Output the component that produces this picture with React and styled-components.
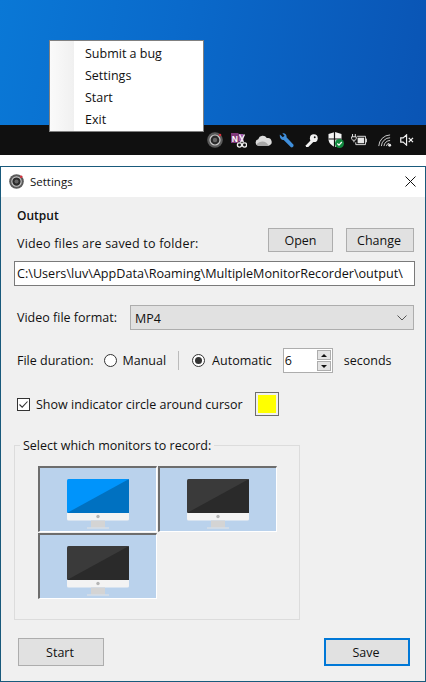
import React from "react"
import styled, { createGlobalStyle } from "styled-components"

const Global = createGlobalStyle`
html, body { margin: 0; padding: 0; background: #fff; }
* { box-sizing: border-box; }
body { font-family: "Open Sans", "Noto Sans", sans-serif; font-size: 12px; color: #111; }
`

const Page = styled.div`
width: 426px;
height: 682px;
position: relative;
overflow: hidden;
display: flex;
flex-direction: column;
`

const Desktop = styled.div`
height: 125px;
background: linear-gradient(100deg, #0a78d6 0%, #0a6acb 40%, #0a54b4 100%);
`

const Taskbar = styled.div`
height: 30px;
background: #101010;
display: flex;
align-items: center;
padding-left: 207px;
`

const TrayIcon = styled.svg`
display: block;
flex: none;
margin-left: ${props => props.$gap}px;
`

const Menu = styled.div`
position: absolute;
left: 49px;
top: 40px;
width: 155px;
height: 92px;
background: linear-gradient(90deg, #fafafa 0, #f0f0f0 24px, #fff 24px);
border: 1px solid #808080;
padding-top: 2px;
`

const MenuItem = styled.div`
height: 22px;
line-height: 22px;
padding-left: 35px;
font-size: 12.5px;
color: #111;
`

const Window = styled.div`
margin-top: 11px;
flex: 1;
border: 1px solid #195a7c;
background: #f0f0f0;
display: flex;
flex-direction: column;
`

const TitleBar = styled.div`
height: 30px;
background: #fff;
display: flex;
align-items: center;
padding: 0 9px 2px 8px;
font-size: 11.5px;
gap: 6px;
`

const TitleText = styled.span`
flex: 1;
`

const Body = styled.div`
flex: 1;
padding: 0 11px 0 13px;
display: flex;
flex-direction: column;
`

const Heading = styled.div`
margin: 10px 0 0 3px;
height: 17px;
line-height: 17px;
font-weight: 600;
font-size: 12px;
`

const FolderRow = styled.div`
margin: 4px 0 0 3px;
height: 24px;
display: flex;
align-items: center;
gap: 13px;
`

const Label = styled.span`
font-size: 12.5px;
white-space: nowrap;
flex: ${props => (props.$grow ? 1 : "none")};
margin-left: ${props => props.$left || 0}px;
padding-top: ${props => props.$down || 0}px;
letter-spacing: ${props => props.$track || 0}px;
`

const Button = styled.div`
width: ${props => props.$w}px;
height: ${props => props.$h}px;
background: #e1e1e1;
border: ${props => (props.$primary ? "2px solid #0078d7" : "1px solid #adadad")};
display: flex;
align-items: center;
justify-content: center;
padding-right: ${props => (props.$nudge ? 0 : 2)}px;
font-size: 12.5px;
`

const PathBox = styled.div`
margin-top: 9px;
height: 25px;
background: #fff;
border: 1px solid #7a7a7a;
display: flex;
align-items: center;
padding-left: 2px;
font-size: 12.63px;
white-space: nowrap;
overflow: hidden;
width: 401px;
`

const FormatRow = styled.div`
margin: 19px 0 0 3px;
height: 25px;
display: flex;
align-items: center;
gap: 13px;
`

const Select = styled.div`
flex: 1;
height: 25px;
background: #e1e1e1;
border: 1px solid #adadad;
display: flex;
align-items: center;
justify-content: space-between;
padding: 1px 6px 0 4px;
font-size: 12.5px;
`

const DurationRow = styled.div`
margin: 18px 0 0 3px;
height: 25px;
display: flex;
align-items: center;
`

const Radio = styled.span`
width: 13px;
height: 13px;
border-radius: 50%;
border: 1px solid #333;
background: #fff;
flex: none;
display: flex;
align-items: center;
justify-content: center;
margin-left: ${props => props.$left}px;
margin-right: ${props => (props.$on ? 7 : 5)}px;
&::after {
  content: "";
  width: 7px;
  height: 7px;
  border-radius: 50%;
  background: ${props => (props.$on ? "#333" : "transparent")};
}
`

const Divider = styled.span`
width: 1px;
height: 19px;
background: #bbb;
margin-left: 12px;
`

const Spin = styled.div`
width: 50px;
height: 25px;
margin-left: 11px;
background: #fff;
border: 1px solid #adadad;
display: flex;
align-items: center;
justify-content: space-between;
padding: 0 1px 0 1px;
font-size: 12.5px;
`

const SpinButtons = styled.div`
width: 14px;
height: 21px;
display: flex;
flex-direction: column;
justify-content: space-between;
`

const SpinButton = styled.div`
height: 10px;
background: #e3e3e3;
border: 1px solid #adadad;
display: flex;
align-items: center;
justify-content: center;
&::after {
  content: "";
  border-left: 3px solid transparent;
  border-right: 3px solid transparent;
  ${props => (props.$down ? "border-top: 3px solid #111;" : "border-bottom: 3px solid #111;")}
}
`

const CursorRow = styled.div`
margin: 19px 0 0 3px;
height: 24px;
display: flex;
align-items: center;
`

const Check = styled.svg`
display: block;
flex: none;
margin-right: 6px;
`

const Swatch = styled.div`
width: 24px;
height: 24px;
margin-left: 12px;
border: 1px solid #6d6d6d;
padding: 2px;
background: #f0f0f0;
&::after {
  content: "";
  display: block;
  width: 18px;
  height: 18px;
  background: #ff0;
}
`

const Group = styled.div`
position: relative;
margin-top: 29px;
width: 286px;
height: 175px;
border: 1px solid #dcdcdc;
padding: 20px 0 0 23px;
`

const Legend = styled.span`
position: absolute;
left: 5px;
top: -8px;
padding: 0 3px;
background: #f0f0f0;
font-size: 12.5px;
line-height: 16px;
`

const Monitors = styled.div`
display: grid;
grid-template-columns: 119px 119px;
grid-auto-rows: 66px;
column-gap: 1px;
row-gap: 1px;
`

const MonitorCell = styled.div`
background: #bad2ec;
border-style: solid;
border-width: 2px 1px 1px 2px;
border-color: #6d6d6d #fff #fff #6d6d6d;
display: flex;
align-items: flex-start;
justify-content: center;
padding-top: 11px;
`

const Footer = styled.div`
margin-top: 18px;
padding: 0 4px;
display: flex;
justify-content: space-between;
`

const Monitor = ({ light, dark }) => (
  <svg width="62" height="50" viewBox="0 0 62 50">
    <rect x="0" y="0" width="62" height="34" rx="1.5" fill={light} />
    <path d="M0 34 L62 0 V34 Z" fill={dark} />
    <path d="M0 34 H62 V40 a1.5 1.5 0 0 1 -1.5 1.5 H1.5 A1.5 1.5 0 0 1 0 40 Z" fill="#f3f3f3" />
    <circle cx="31" cy="37.5" r="1.7" fill="#b5b5b5" />
    <rect x="24" y="41.5" width="14" height="7" fill="#d4d4d4" />
    <rect x="20" y="48.5" width="22" height="1" fill="#e4e4e4" />
  </svg>
)

const RecordIcon = ({ size, gap }) => (
  <TrayIcon $gap={gap} width={size} height={size} viewBox="0 0 16 16">
    <circle cx="8" cy="8" r="7.8" fill="#5a5a5a" />
    <circle cx="8" cy="8" r="5" fill="#2a2a2a" stroke="#c9c9c9" strokeWidth="1.2" />
    <circle cx="8" cy="8" r="2.2" fill="#666" />
    <circle cx="13" cy="3" r="1.3" fill="#d8323c" />
  </TrayIcon>
)

const App = () => (
  <Page>
    <Global />
    <Desktop />
    <Taskbar>
      <RecordIcon size={16} gap={0} />
      {/* onenote clipper */}
      <TrayIcon $gap={8} width="16" height="15" viewBox="0 0 16 15">
        <rect x="0" y="0" width="7.5" height="10" fill="#80397b" />
        <rect x="7.5" y="1" width="5" height="7.5" fill="#a45bb0" />
        <text x="0.8" y="8.5" fontSize="8.5" fontWeight="700" fill="#fff" fontFamily="Liberation Sans">N</text>
        <path d="M8.5 1.5 L12.5 9.5 M13.5 1.5 L9.5 9.5" stroke="#f0f0f0" strokeWidth="1.4" fill="none" />
        <circle cx="8.5" cy="12" r="2.1" fill="#101010" stroke="#f0f0f0" strokeWidth="1.3" />
        <circle cx="13.5" cy="12" r="2.1" fill="#101010" stroke="#f0f0f0" strokeWidth="1.3" />
      </TrayIcon>
      {/* cloud */}
      <TrayIcon $gap={8} width="17" height="12" viewBox="0 0 18 12">
        <path d="M4 12 a3.5 3.5 0 0 1 -.6 -6.9 A5 5 0 0 1 12.5 4 a3.6 3.6 0 0 1 2 8 Z" fill="#dcdcdc" />
        <path d="M1 11 C5 7 9 7 12 9 L15 12 H4 Z" fill="#a9a9a9" />
      </TrayIcon>
      {/* wrench */}
      <TrayIcon $gap={7} width="15" height="15" viewBox="0 0 16 16">
        <path d="M1 1.5 L4 4.5 L6 3 L3.6 0.5 C6 -0.4 8.5 1.5 8 4.5 L15.5 12.5 C15.8 14.5 14.5 15.8 12.8 15.3 L5 7.5 C2.5 8 0.2 5 1 1.5 Z" fill="#3f8fdc" />
      </TrayIcon>
      {/* key */}
      <TrayIcon $gap={11} width="13" height="13" viewBox="0 0 14 14">
        <circle cx="9.5" cy="4.5" r="4.2" fill="#f2f2f2" />
        <path d="M7 6 L1 12 V14 H3.5 L9 8.5 Z" fill="#f2f2f2" />
        <circle cx="10.5" cy="3.5" r="1" fill="#101010" />
      </TrayIcon>
      {/* defender shield */}
      <TrayIcon $gap={10} width="16" height="16" viewBox="0 0 16 16">
        <path d="M7 0 L13.5 2 V7 C13.5 11 10.5 13.5 7 15 C3.5 13.5 0.5 11 0.5 7 V2 Z" fill="#f4f4f4" />
        <path d="M6.5 0 V15 M0.5 7 H13.5" stroke="#101010" strokeWidth="1.2" />
        <circle cx="11.5" cy="11.5" r="4.5" fill="#10893e" />
        <path d="M9.3 11.5 L11 13.2 L13.8 10" stroke="#fff" strokeWidth="1.2" fill="none" />
      </TrayIcon>
      {/* battery charging */}
      <TrayIcon $gap={7} width="16" height="12" viewBox="0 0 17 13">
        <path d="M1.5 0 V3 M4.5 0 V3 M0.5 3 H5.5 V5 C5.5 6.3 4 6.8 3 6.8 C2 6.8 0.5 6.3 0.5 5 Z M3 6.8 V9" stroke="#f0f0f0" strokeWidth="1" fill="#101010" />
        <path d="M6.5 2.5 H15.5 V11.5 H5 V9" stroke="#e6e6e6" strokeWidth="1" fill="none" />
        <rect x="7" y="4" width="7" height="6" fill="#e6e6e6" />
        <rect x="16" y="5" width="1" height="4" fill="#e6e6e6" />
      </TrayIcon>
      {/* wifi */}
      <TrayIcon $gap={11} width="14" height="13" viewBox="0 0 15 14">
        <path d="M0.8 13 A12.5 12.5 0 0 1 13 1 M3.6 13 A9.5 9.5 0 0 1 13 4 M6.4 13 A6.5 6.5 0 0 1 13 7 M9 13 A3.5 3.5 0 0 1 12 10" stroke="#d5d5d5" strokeWidth="1" fill="none" />
        <circle cx="12.5" cy="12" r="1.6" fill="#e8e8e8" />
      </TrayIcon>
      {/* muted speaker */}
      <TrayIcon $gap={8} width="14" height="12" viewBox="0 0 16 14">
        <path d="M0.7 4.5 H3.5 L7.5 1 V13 L3.5 9.5 H0.7 Z" stroke="#f2f2f2" strokeWidth="1.4" fill="none" />
        <path d="M10 4.5 L15 9.5 M15 4.5 L10 9.5" stroke="#f2f2f2" strokeWidth="1.5" />
      </TrayIcon>
    </Taskbar>
    <Menu>
      <MenuItem>Submit a bug</MenuItem>
      <MenuItem>Settings</MenuItem>
      <MenuItem>Start</MenuItem>
      <MenuItem>Exit</MenuItem>
    </Menu>

    <Window>
      <TitleBar>
        <RecordIcon size={15} gap={0} />
        <TitleText>Settings</TitleText>
        <svg width="11" height="11" viewBox="0 0 11 11">
          <path d="M0.5 0.5 L10.5 10.5 M10.5 0.5 L0.5 10.5" stroke="#111" strokeWidth="1" />
        </svg>
      </TitleBar>
      <Body>
        <Heading>Output</Heading>
        <FolderRow>
          <Label $grow $down={6} $track={0.19}>Video files are saved to folder:</Label>
          <Button $w={65} $h={24} $nudge>Open</Button>
          <Button $w={68} $h={24}>Change</Button>
        </FolderRow>
        <PathBox>C:\Users\luv\AppData\Roaming\MultipleMonitorRecorder\output\</PathBox>
        <FormatRow>
          <Label>Video file format:</Label>
          <Select>
            MP4
            <svg width="10" height="6" viewBox="0 0 10 6">
              <path d="M0.5 0.5 L5 5 L9.5 0.5" stroke="#555" strokeWidth="1" fill="none" />
            </svg>
          </Select>
        </FormatRow>
        <DurationRow>
          <Label>File duration:</Label>
          <Radio $left={11} />
          <Label>Manual</Label>
          <Divider />
          <Radio $left={13} $on />
          <Label>Automatic</Label>
          <Spin>
            <span>6</span>
            <SpinButtons>
              <SpinButton />
              <SpinButton $down />
            </SpinButtons>
          </Spin>
          <Label $left={11}>seconds</Label>
        </DurationRow>
        <CursorRow>
          <Check width="13" height="13" viewBox="0 0 13 13">
            <rect x="0.5" y="0.5" width="12" height="12" fill="#fff" stroke="#333" />
            <path d="M2.5 6.5 L5.2 9.2 L10.5 3.5" stroke="#333" strokeWidth="1.1" fill="none" />
          </Check>
          <Label>Show indicator circle around cursor</Label>
          <Swatch />
        </CursorRow>
        <Group>
          <Legend>Select which monitors to record:</Legend>
          <Monitors>
            <MonitorCell>
              <Monitor light="#0094fb" dark="#0071c1" />
            </MonitorCell>
            <MonitorCell>
              <Monitor light="#3a3a3a" dark="#2a2a2a" />
            </MonitorCell>
            <MonitorCell>
              <Monitor light="#3a3a3a" dark="#2a2a2a" />
            </MonitorCell>
          </Monitors>
        </Group>
        <Footer>
          <Button $w={86} $h={28}>Start</Button>
          <Button $w={86} $h={28} $primary>Save</Button>
        </Footer>
      </Body>
    </Window>
  </Page>
)

export default App
